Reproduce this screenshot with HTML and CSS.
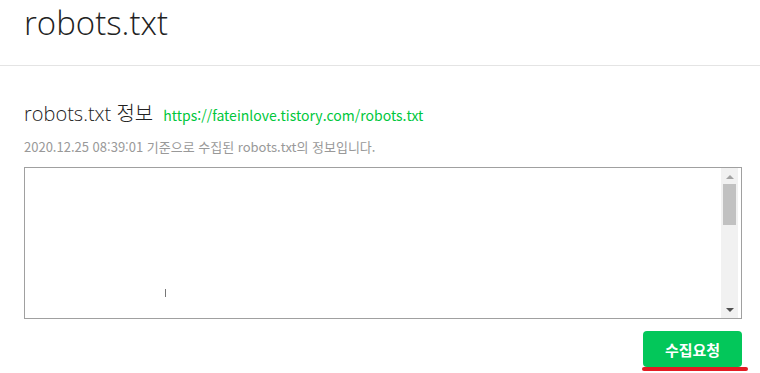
FILE: index.html
```html
<!DOCTYPE html>
<html lang="ko">
<head>
  <meta charset="UTF-8">
  <title>robots.txt</title>
  <link rel="stylesheet" href="styles.css">
</head>
<body>
<header class="page-head">
  <h1>robots.txt</h1>
</header>

<section class="robots">
  <div class="robots-title">
    <h2>robots.txt 정보</h2>
    <a class="robots-url" href="#">https://fateinlove.tistory.com/robots.txt</a>
  </div>
  <p class="robots-date">2020.12.25 08:39:01 기준으로 수집된 robots.txt의 정보입니다.</p>

  <div class="robots-box">
    <div class="robots-content">
      <span class="caret"></span>
    </div>
    <div class="scrollbar">
      <span class="arrow up"></span>
      <span class="thumb"></span>
      <span class="track"></span>
      <span class="arrow down"></span>
    </div>
  </div>

  <div class="actions">
    <button class="btn-collect" type="button">수집요청</button>
    <div class="mark-line"></div>
  </div>
</section>
</body>
</html>
```

FILE: styles.css
```css
body {
    margin: 0;
    font-family: "Noto Sans CJK KR", "Noto Sans", sans-serif;
    color: #333;
    background: #fff;
}
.page-head {
    height: 66px;
    border-bottom: 1px solid #e4e4e4;
    padding-left: 24px;
    box-sizing: border-box;
}
.page-head h1 {
    margin: 0;
    padding-top: 1px;
    font-family: "Open Sans", "Noto Sans CJK KR", sans-serif;
    font-size: 33px;
    font-weight: 300;
    line-height: 44px;
    color: #222;
}
.robots {
    padding: 0 18px 0 24px;
}
.robots-title {
    display: flex;
    align-items: baseline;
    gap: 10px;
    margin-top: 35px;
}
.robots-title h2 {
    margin: 0;
    font-family: "Open Sans", "Noto Sans CJK KR", sans-serif;
    font-size: 20px;
    font-weight: 300;
    line-height: 26px;
    color: #222;
}
.robots-url {
    font-size: 14px;
    color: #00c73c;
    text-decoration: none;
}
.robots-date {
    margin: 11px 0 0;
    font-size: 13px;
    line-height: 18px;
    color: #999;
}
.robots-box {
    display: flex;
    height: 152px;
    margin-top: 11px;
    border: 1px solid #a0a0a0;
    box-sizing: border-box;
    padding-right: 3px;
}
.robots-content {
    flex: 1;
    position: relative;
}
.caret {
    position: absolute;
    left: 140px;
    top: 121px;
    width: 1px;
    height: 8px;
    background: #777;
}
.scrollbar {
    width: 17px;
    display: flex;
    flex-direction: column;
    align-items: center;
    background: #f1f1f1;
}
.arrow {
    width: 0;
    height: 0;
    border-left: 4px solid transparent;
    border-right: 4px solid transparent;
}
.arrow.up {
    margin-top: 7px;
    border-bottom: 4px solid #a3a3a3;
}
.arrow.down {
    margin-bottom: 6px;
    border-top: 4px solid #505050;
}
.thumb {
    width: 13px;
    height: 41px;
    margin-top: 5px;
    background: #c1c1c1;
}
.track {
    flex: 1;
}
.actions {
    display: flex;
    flex-direction: column;
    align-items: flex-end;
    margin-top: 12px;
}
.btn-collect {
    display: block;
    width: 99px;
    height: 36px;
    border: 0;
    border-radius: 4px;
    background: #03c75a;
    color: #fff;
    font-family: "Noto Sans CJK KR", sans-serif;
    font-size: 15px;
    font-weight: 700;
    cursor: pointer;
}
.mark-line {
    width: 106px;
    height: 4px;
    margin-right: -6px;
    border-radius: 2px;
    background: #e31b23;
}
```
